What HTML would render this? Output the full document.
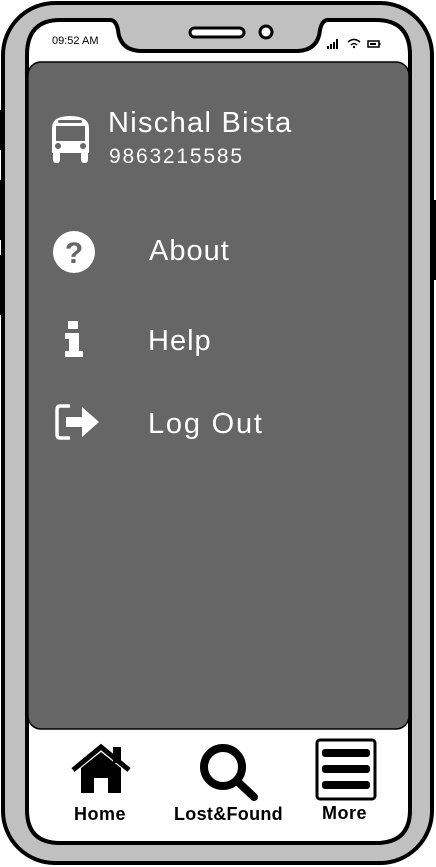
<!DOCTYPE html>
<html><head><meta charset="utf-8"><style>
html,body{margin:0;padding:0;width:436px;height:867px;overflow:hidden;background:#fff;font-family:"Liberation Sans",sans-serif}
.t{position:absolute;color:#fff;white-space:nowrap;letter-spacing:1px}
.b{position:absolute;color:#000;font-weight:bold;font-size:18px;white-space:nowrap}
</style></head><body>
<svg width="436" height="867" style="position:absolute;left:0;top:0">
<rect x="3" y="3" width="429" height="860" rx="52" fill="#c0c0c0" stroke="#000" stroke-width="4"/>
<rect x="-1" y="110" width="4" height="40" fill="#000"/>
<rect x="-1" y="180" width="4" height="60" fill="#000"/>
<rect x="-1" y="255" width="4" height="60" fill="#000"/>
<rect x="432" y="200" width="4" height="80" fill="#000"/>
<path d="M60 20 H110 Q116 20 118 30 Q120 50 140 51 H298 Q318 50 320 30 Q322 20 328 20 H376 Q410 20 410 55 V810 Q410 843 376 843 H60 Q27 843 27 810 V55 Q27 20 60 20 Z" fill="#fff" stroke="#000" stroke-width="4"/>
<rect x="28" y="62" width="381" height="667" rx="13" fill="#666" stroke="#000" stroke-width="1.5"/>
<rect x="190" y="28" width="54" height="9" rx="4.5" fill="#fff" stroke="#000" stroke-width="3"/>
<ellipse cx="266" cy="32" rx="6" ry="6" fill="#fff" stroke="#000" stroke-width="3"/>
<rect x="327" y="46" width="2" height="3" fill="#000"/><rect x="330" y="44" width="2" height="5" fill="#000"/><rect x="333" y="42" width="2" height="7" fill="#000"/><rect x="336" y="39" width="2" height="10" fill="#000"/>
<path d="M348 42 Q354 37 360 42" stroke="#000" stroke-width="1.5" fill="none"/><path d="M351 45 Q354 42 357 45" stroke="#000" stroke-width="1.5" fill="none"/><circle cx="354" cy="47" r="1.2" fill="#000"/>
<rect x="368" y="41" width="11" height="6" fill="none" stroke="#000" stroke-width="1.5"/><rect x="370" y="43" width="6" height="2" fill="#000"/><rect x="379" y="43" width="1.5" height="2" fill="#000"/>
<path d="M52 128 Q52 116 70 116 Q89 116 89 128 V153 H52 Z" fill="#fff"/>
<rect x="58" y="120" width="24" height="3" rx="1.5" fill="#666"/>
<rect x="56" y="126" width="29" height="15" fill="#666"/>
<rect x="53" y="150" width="7" height="13" rx="3" fill="#fff"/><rect x="81" y="150" width="7" height="13" rx="3" fill="#fff"/>
<circle cx="58" cy="146" r="3" fill="#666"/><circle cx="83" cy="146" r="3" fill="#666"/>
<circle cx="74" cy="252" r="21" fill="#fff"/>
<text x="74" y="263" text-anchor="middle" font-family="Liberation Sans" font-weight="bold" font-size="30" fill="#666">?</text>
<rect x="68" y="321" width="10" height="8" fill="#fff"/>
<path d="M65 333 H79 V351 H83 V357 H65 V351 H69 V339 H65 Z" fill="#fff"/>
<path d="M70 406 H60 Q57 406 57 410 V434 Q57 438 60 438 H70" fill="none" stroke="#fff" stroke-width="3.5"/>
<path d="M66 417 H82 V407 L99 422 L82 437 V427 H66 Z" fill="#fff"/>
<path d="M73 770 L101 747 L129 770" fill="none" stroke="#000" stroke-width="5"/>
<rect x="113" y="747" width="8" height="16" fill="#000"/>
<path d="M81 768 L101 752 L121 768 V793 H108 V778 H94 V793 H81 Z" fill="#000"/>
<circle cx="223" cy="767" r="19" fill="none" stroke="#000" stroke-width="8"/>
<line x1="237" y1="781" x2="254" y2="797" stroke="#000" stroke-width="8" stroke-linecap="round"/>
<rect x="317" y="740" width="58" height="59" rx="3" fill="#fff" stroke="#000" stroke-width="3"/>
<rect x="322" y="749" width="48" height="8" rx="3" fill="#000"/>
<rect x="322" y="765" width="48" height="8" rx="3" fill="#000"/>
<rect x="322" y="781" width="48" height="8" rx="3" fill="#000"/>
</svg>
<div class="b" style="left:52px;top:35px;font-size:11px;font-weight:normal">09:52 AM</div>
<div class="t" style="left:108px;top:107px;font-size:29px;letter-spacing:1.3px">Nischal Bista</div>
<div class="t" style="left:109px;top:145px;font-size:21px;letter-spacing:1.8px">9863215585</div>
<div class="t" style="left:149px;top:235px;font-size:29px">About</div>
<div class="t" style="left:148px;top:325px;font-size:29px">Help</div>
<div class="t" style="left:148px;top:408px;font-size:29px;letter-spacing:1.8px">Log Out</div>
<div class="b" style="left:74px;top:804px;letter-spacing:0.5px">Home</div>
<div class="b" style="left:174px;top:804px;letter-spacing:0.3px">Lost&amp;Found</div>
<div class="b" style="left:322px;top:803px;letter-spacing:0.5px">More</div>
</body></html>
